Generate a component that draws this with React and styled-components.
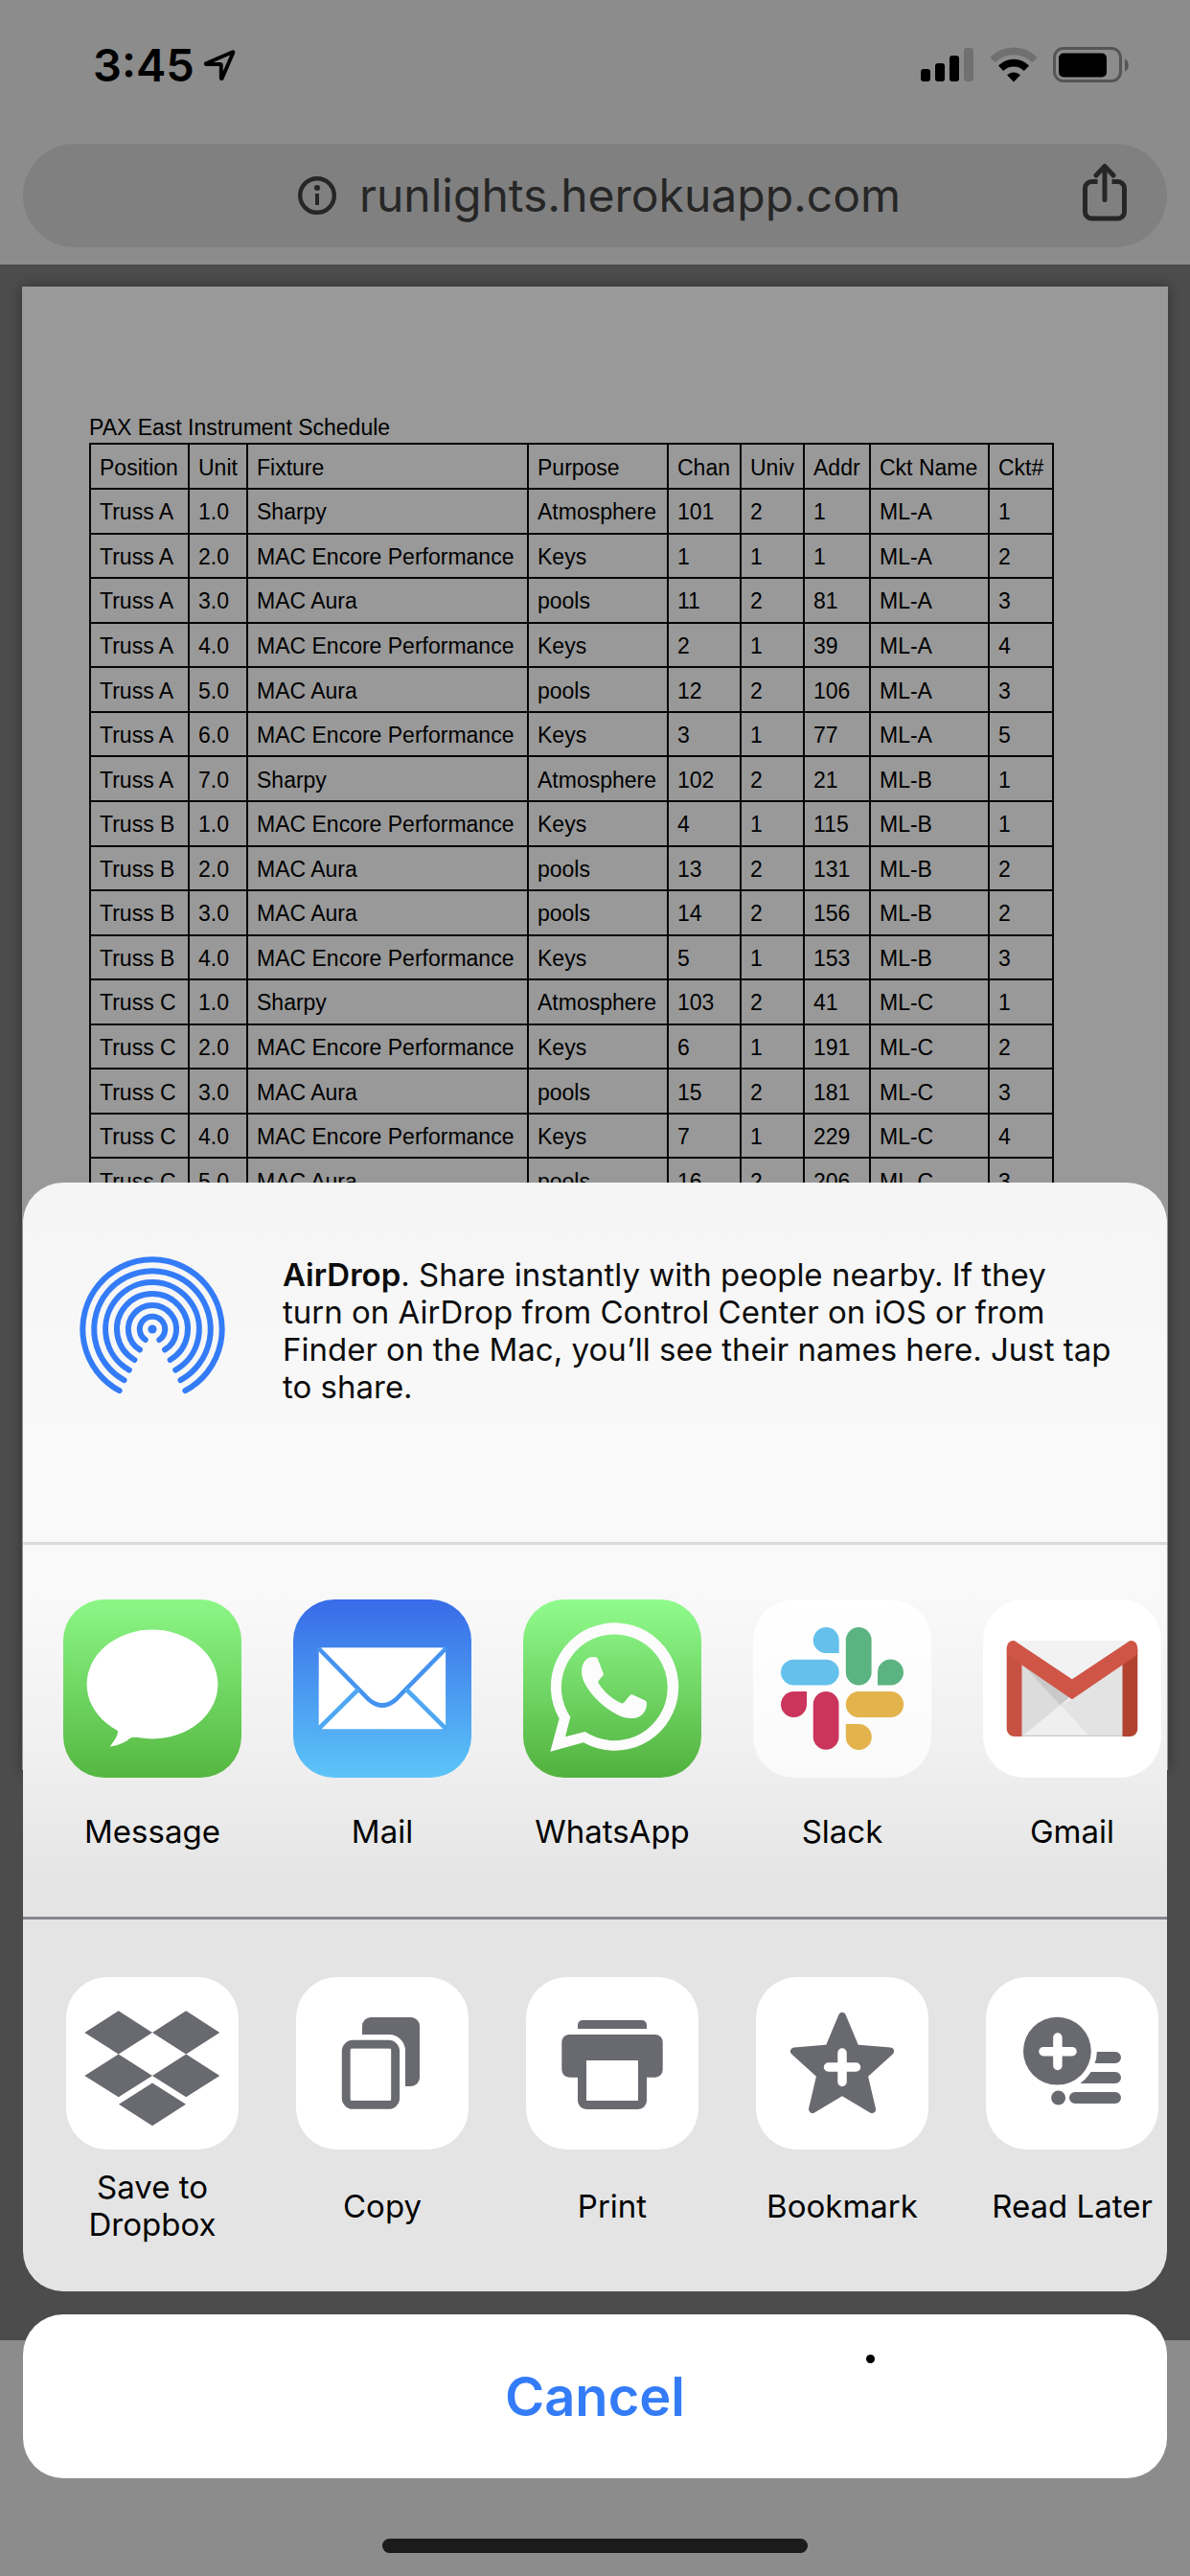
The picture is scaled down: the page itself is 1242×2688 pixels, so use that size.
import React from 'react';
import styled, { createGlobalStyle } from 'styled-components';

const GlobalStyle = createGlobalStyle`
  * { box-sizing: border-box; }
  body { margin: 0; background: #8c8c8c; }
  button { border: 0; padding: 0; margin: 0; background: none; color: inherit; font: inherit; cursor: pointer; }
  svg { display: block; flex: none; }
`;

const uiFont = `Inter, Roboto, 'Liberation Sans', sans-serif`;

const Screen = styled.div`
  position: relative;
  height: 100vh;
  display: flex;
  flex-direction: column;
  overflow: hidden;
  background: #8c8c8c;
  font-family: ${uiFont};
`;

const StatusBar = styled.header`
  height: 136px;
  flex: none;
  display: flex;
  justify-content: space-between;
  align-items: center;
  padding: 0 63px 0 97px;
`;

const StatusGroup = styled.div`
  display: flex;
  align-items: center;
  gap: ${(p) => p.$gap}px;
`;

const Clock = styled.time`
  font-size: 47px;
  line-height: 60px;
  font-weight: 600;
  color: #000;
`;

const Toolbar = styled.nav`
  flex: none;
  padding: 14px 24px 18px;
`;

const AddressBar = styled.div`
  height: 108px;
  border-radius: 54px;
  background: #808080;
  color: #262626;
  display: grid;
  grid-template-columns: 64px 1fr 64px;
  align-items: center;
  padding: 0 33px 0 42px;
`;

const Address = styled.button`
  grid-column: 2;
  display: flex;
  align-items: center;
  justify-content: center;
  gap: 24px;
  font-size: 48px;
  line-height: 60px;
`;

const ShareButton = styled.button`
  display: flex;
  justify-content: center;
`;

const Viewport = styled.main`
  flex: 1;
  min-height: 0;
  overflow: hidden;
  padding: 23px 23px 0;
  background: #4c4c4c;
`;

const Paper = styled.article`
  aspect-ratio: 17 / 22;
  padding: 134px 70px 0;
  background: #999;
  box-shadow: 0 0 12px rgba(0, 0, 0, 0.35);
  font-family: 'Liberation Sans', Arial, sans-serif;
  font-size: 23px;
  line-height: 26px;
  color: #000;
`;

const Schedule = styled.table`
  width: 1006px;
  height: 794px;
  table-layout: fixed;
  border-collapse: collapse;

  caption {
    text-align: left;
    padding-bottom: 3px;
  }
  th, td {
    border: 2px solid #050505;
    padding: 2px 0 0 9px;
    text-align: left;
    vertical-align: middle;
    font-weight: 400;
    white-space: nowrap;
  }
  th { height: 47px; }
  td { height: 46px; }
`;

const Column = styled.col`
  width: ${(p) => p.$width}px;
`;

const BottomBar = styled.footer`
  flex: none;
  height: 246px;
`;

const Overlay = styled.div`
  position: absolute;
  inset: 0;
  display: flex;
  flex-direction: column;
  justify-content: flex-end;
  padding: 0 24px 24px;
`;

const Sheet = styled.section`
  border-radius: 42px;
  overflow: hidden;
  background: linear-gradient(#f5f5f5 0, #f9f9f9 260px, #f9f9f9 430px, #f0f0f0 590px, #e4e4e4 740px, #e4e4e4 100%);
`;

const AirDropPanel = styled.div`
  display: grid;
  grid-template-columns: 152px 1fr;
  column-gap: 60px;
  align-items: start;
  min-height: 375px;
  padding: 77px 32px 0 59px;
`;

const AirDropText = styled.p`
  margin: 0;
  font-size: 33px;
  line-height: 39px;
  color: #0c0c0c;

  strong { font-weight: 600; }
`;

const Divider = styled.hr`
  height: 3px;
  margin: 0;
  border: 0;
  background: ${(p) => p.$color};
`;

const TileRow = styled.div`
  display: flex;
  min-height: 388px;
  padding: ${(p) => p.$top}px 0 0 15px;
  overflow: hidden;
`;

const TileButton = styled.button`
  flex: none;
  width: 240px;
  display: flex;
  flex-direction: column;
  align-items: center;
  align-self: flex-start;
  font-size: 33px;
  line-height: 39px;
  color: #000;
`;

const Tile = styled.span`
  width: ${(p) => p.$size}px;
  height: ${(p) => p.$size}px;
  border-radius: 43px;
  overflow: hidden;
  background: ${(p) => p.$fill};
  color: #696970;
`;

const TileLabel = styled.span`
  display: flex;
  align-items: center;
  justify-content: center;
  height: ${(p) => p.$height}px;
  max-width: ${(p) => p.$max}px;
  margin-top: 20px;
`;

const CancelButton = styled.button`
  position: relative;
  flex: none;
  height: 171px;
  margin-top: 24px;
  border-radius: 42px;
  background: #fff;
  color: #347cf7;
  font-size: 56px;
  line-height: 68px;
  font-weight: 600;
`;

const TouchDot = styled.span`
  position: absolute;
  top: 42px;
  left: 880px;
  width: 9px;
  height: 9px;
  border-radius: 50%;
  background: #000;
`;

const HomeIndicator = styled.div`
  align-self: center;
  flex: none;
  width: 444px;
  height: 15px;
  margin-top: 63px;
  border-radius: 8px;
  background: #1b1b1b;
`;

const columns = [
  ['Position', 103], ['Unit', 61], ['Fixture', 293], ['Purpose', 146], ['Chan', 76],
  ['Univ', 66], ['Addr', 69], ['Ckt Name', 124], ['Ckt#', 67],
];

const rows = [
  ['Truss A', '1.0', 'Sharpy', 'Atmosphere', '101', '2', '1', 'ML-A', '1'],
  ['Truss A', '2.0', 'MAC Encore Performance', 'Keys', '1', '1', '1', 'ML-A', '2'],
  ['Truss A', '3.0', 'MAC Aura', 'pools', '11', '2', '81', 'ML-A', '3'],
  ['Truss A', '4.0', 'MAC Encore Performance', 'Keys', '2', '1', '39', 'ML-A', '4'],
  ['Truss A', '5.0', 'MAC Aura', 'pools', '12', '2', '106', 'ML-A', '3'],
  ['Truss A', '6.0', 'MAC Encore Performance', 'Keys', '3', '1', '77', 'ML-A', '5'],
  ['Truss A', '7.0', 'Sharpy', 'Atmosphere', '102', '2', '21', 'ML-B', '1'],
  ['Truss B', '1.0', 'MAC Encore Performance', 'Keys', '4', '1', '115', 'ML-B', '1'],
  ['Truss B', '2.0', 'MAC Aura', 'pools', '13', '2', '131', 'ML-B', '2'],
  ['Truss B', '3.0', 'MAC Aura', 'pools', '14', '2', '156', 'ML-B', '2'],
  ['Truss B', '4.0', 'MAC Encore Performance', 'Keys', '5', '1', '153', 'ML-B', '3'],
  ['Truss C', '1.0', 'Sharpy', 'Atmosphere', '103', '2', '41', 'ML-C', '1'],
  ['Truss C', '2.0', 'MAC Encore Performance', 'Keys', '6', '1', '191', 'ML-C', '2'],
  ['Truss C', '3.0', 'MAC Aura', 'pools', '15', '2', '181', 'ML-C', '3'],
  ['Truss C', '4.0', 'MAC Encore Performance', 'Keys', '7', '1', '229', 'ML-C', '4'],
  ['Truss C', '5.0', 'MAC Aura', 'pools', '16', '2', '206', 'ML-C', '3'],
];

const LocationIcon = () => (
  <svg width="36" height="36" viewBox="0 0 36 36" fill="none" stroke="#000" strokeWidth="3.900" strokeLinejoin="round" aria-hidden="true">
    <path d="M31.800 4.200L4 16.200C3.600 16.400 3.700 17 4.200 17H18.600C19.400 17 19.800 17.400 19.800 18.200V31.600C19.800 32.200 20.500 32.300 20.700 31.800L32.400 4.800C32.600 4.300 32.300 4 31.800 4.200Z" />
  </svg>
);

const SignalIcon = () => (
  <svg width="56" height="38" viewBox="0 0 56 38" aria-hidden="true">
    <rect x="0" y="23" width="10" height="13" rx="3" />
    <rect x="15" y="17" width="10" height="19" rx="3" />
    <rect x="30" y="9" width="10" height="27" rx="3" />
    <rect x="45" y="1" width="10" height="35" rx="3" fill="#707070" />
  </svg>
);

const WifiIcon = () => (
  <svg width="50" height="38" viewBox="0 0 50 38" fill="none" aria-hidden="true">
    <path d="M3 13.6C15.400 1.300 34.600 1.300 47 13.600" stroke="#707070" strokeWidth="7.600" />
    <path d="M11.600 22.200C19.200 14.800 30.800 14.800 38.400 22.200" stroke="#000" strokeWidth="7.600" />
    <path d="M18 29.300C22 25.400 28 25.400 32 29.300L25 36.500Z" fill="#000" />
  </svg>
);

const BatteryIcon = () => (
  <svg width="80" height="38" viewBox="0 0 80 38" aria-hidden="true">
    <rect x="1.500" y="1.500" width="69" height="34" rx="9.500" fill="none" stroke="#555" strokeWidth="3" />
    <rect x="6" y="6.500" width="50" height="25" rx="5" />
    <path d="M75 12.500c5 2 5 11 0 13z" fill="#555" />
  </svg>
);

const InfoIcon = () => (
  <svg width="40" height="40" viewBox="0 0 40 40" aria-hidden="true">
    <circle cx="20" cy="20" r="17.800" fill="none" stroke="currentColor" strokeWidth="4.400" />
    <circle cx="20" cy="12" r="3" fill="currentColor" />
    <rect x="18" y="18" width="4" height="12" fill="currentColor" />
  </svg>
);

const ShareIcon = () => (
  <svg width="46" height="68" viewBox="0 3 46 68" fill="none" stroke="currentColor" strokeWidth="5" aria-hidden="true">
    <path d="M15.500 22.500H9.500a7 7 0 0 0-7 7V54a7 7 0 0 0 7 7h27a7 7 0 0 0 7-7V29.500a7 7 0 0 0-7-7h-6" />
    <path d="M23 41.500V8M14 16l9-9.500L32 16" strokeLinecap="round" strokeLinejoin="round" />
  </svg>
);

const arcs = [[13.2, 33.5], [25.1, 31.5], [37, 30.2], [48.900, 29.600], [60.800, 29], [72.700, 28.200]];

const arcPath = ([r, degrees]) => {
  const a = (degrees * Math.PI) / 180;
  const dx = r * Math.sin(a);
  const y = 76 + r * Math.cos(a);
  return `M${76 - dx} ${y}A${r} ${r} 0 1 1 ${76 + dx} ${y}`;
};

const AirDropIcon = () => (
  <svg width="152" height="152" viewBox="0 0 152 152" aria-hidden="true">
    <circle cx="76" cy="76" r="4.600" fill="#347cf7" />
    {arcs.map((arc) => (
      <path key={arc[0]} d={arcPath(arc)} fill="none" stroke="#347cf7" strokeWidth="6" strokeLinecap="round" />
    ))}
  </svg>
);

const AppIcon = ({ size, children }) => (
  <svg width={size} height={size} viewBox={`0 0 ${size} ${size}`} aria-hidden="true">{children}</svg>
);

const MessageGlyph = () => (
  <g fill="#fff">
    <ellipse cx="93" cy="88.500" rx="68.400" ry="56.900" />
    <path d="M54 133C59 138 58 141 48.700 153.500C58 153 66 148 70 144.800C73 143 76 144 80 144L74 128Z" />
  </g>
);

const MailGlyph = () => (
  <g>
    <rect x="26.700" y="50.300" width="132.400" height="85" rx="4" fill="#fff" />
    <path d="M26 50.500L79 104.500Q93 116.500 107 104.500L160 50.500" fill="none" stroke="#4593f0" strokeWidth="4.600" />
    <path d="M68.300 93.500L26 135.500M117.700 93.500L160 135.500" fill="none" stroke="#4fa8f3" strokeWidth="4.600" />
  </g>
);

const WhatsAppGlyph = () => (
  <g fill="#fcfcfc">
    <path fillRule="evenodd" d="M28.300 158.800L37.700 124.300A66.700 66.700 0 1 1 63 149.300ZM44 143.300L64.700 138A55.400 55.400 0 1 0 49.300 122.700Z" />
    <path d="M72 60C68 60 61 64 61 76C61 90 81 112 98 120C104 123 108 124 114 124C122 124 129 118 129 108.500C129 106.500 128.500 106 126.500 105L114.500 99.500C113 99 112 99.300 111 100.500L105.500 107.300C104.500 108.500 103.500 108.700 102 108C93 104 84 96 78.800 87.500C78 86.300 78.200 85.500 79 84.500L83 79.800C84 78.500 84 77.800 83.500 76.500L78 62.500C77 60.300 76.500 60 74.500 60Z" />
  </g>
);

const SlackGlyph = () => (
  <g>
    <g fill="#65c1ec">
      <path d="M89.700 56H76.200A13.500 13.500 0 1 1 89.700 42.500Z" />
      <rect x="29" y="62.700" width="60.700" height="26.800" rx="13.400" />
    </g>
    <g fill="#5bb381">
      <rect x="96.800" y="29" width="26.800" height="60.500" rx="13.400" />
      <path d="M130 89.500V76.100A13.500 13.500 0 1 1 143.500 89.500Z" />
    </g>
    <g fill="#cb355b">
      <path d="M56 96V109.500A13.500 13.500 0 1 1 42.500 96Z" />
      <rect x="62.700" y="96" width="26.800" height="60.700" rx="13.400" />
    </g>
    <g fill="#e3b34c">
      <rect x="96.800" y="96" width="60.300" height="27" rx="13.400" />
      <path d="M96.800 130H110.200A13.500 13.500 0 1 1 96.800 143.500Z" />
    </g>
  </g>
);

const GmailGlyph = () => (
  <g>
    <rect x="32" y="43" width="122" height="100" fill="#e6e6e6" />
    <path d="M33 43H153L93 92Z" fill="#f2f2f2" />
    <path d="M40.500 67L111 143H40.500Z" fill="#dcdcdc" />
    <path d="M40.500 67L93 104.300L81 111Z" fill="#c9c9c9" />
    <path d="M40.500 143L93 100L145.500 143Z" fill="#efefef" />
    <path d="M81 110L93 104.300L145.500 68V143H111Z" fill="#e3e3e3" />
    <path d="M40.500 142.200H145.500" stroke="#cfcfcf" strokeWidth="1.600" />
    <path d="M24.700 52V135a8 8 0 0 0 8 8h7.800V62Z" fill="#c75142" />
    <path d="M161.300 52V135a8 8 0 0 1-8 8h-7.800V62Z" fill="#b1432f" />
    <path d="M24.700 52C24.700 45 28.700 42.500 33 43.200L92.900 83.300L153 43.200C157.500 42.500 161.300 45 161.300 52C161.300 56 160 58.500 157 60.500L92.900 104.300L29 60.500C26 58.500 24.700 56 24.700 52Z" fill="#cf5546" />
  </g>
);

const DropboxGlyph = () => (
  <path fill="currentColor" d="M54.700 35.200L90 57.900L54.700 80.500L19.300 57.900ZM125.200 35.200L160.300 57.900L125.200 80.500L90 57.900ZM54.700 80.500L90 102.900L54.700 125.300L19.300 102.900ZM125.200 80.500L160.300 102.900L125.200 125.300L90 102.900ZM90 110.400L125 132.700L90 155.200L55 132.700Z" />
);

const CopyGlyph = () => (
  <g>
    <path d="M69 60V51a9 9 0 0 1 9-9h42a9 9 0 0 1 9 9v54a9 9 0 0 1-9 9h-6V77a17 17 0 0 0-17-17Z" fill="currentColor" />
    <rect x="52.300" y="70.300" width="51.300" height="63" rx="7" fill="none" stroke="currentColor" strokeWidth="9" />
    <rect x="56.800" y="74.800" width="42.300" height="54" fill="#fff" />
  </g>
);

const PrintGlyph = () => (
  <g fill="currentColor">
    <path d="M54 54v-4a5 5 0 0 1 5-5h62a5 5 0 0 1 5 5v4Z" />
    <rect x="37.300" y="60" width="105.400" height="44.700" rx="8" />
    <rect x="54" y="80" width="72" height="58" rx="9" />
    <rect x="63" y="87" width="54" height="42" fill="#fff" />
  </g>
);

const BookmarkGlyph = () => (
  <g strokeLinejoin="round" strokeLinecap="round">
    <path d="M90 41L104 74.500L140 77.500L112.700 102.300L121 138L90 119.500L59 138L67.300 102.300L40 77.500L76 74.500Z" fill="currentColor" stroke="currentColor" strokeWidth="8" />
    <path d="M90 79V109.500M75.500 94H104.500" stroke="#fff" strokeWidth="9.500" />
  </g>
);

const ReadLaterGlyph = () => (
  <g strokeLinecap="round" stroke="currentColor" strokeWidth="12">
    <path d="M110 84H135M100 105H135M93 126H135" />
    <circle cx="74.400" cy="77.200" r="41.500" fill="#fff" stroke="none" />
    <circle cx="74.400" cy="77.200" r="35.400" fill="currentColor" stroke="none" />
    <circle cx="75.600" cy="126" r="7.500" fill="currentColor" stroke="none" />
    <path d="M74.900 63V92.500M60 77.700H90" stroke="#fff" strokeWidth="9.500" />
  </g>
);

const apps = [
  { label: 'Message', fill: 'linear-gradient(#8cf787, #55b741)', Glyph: MessageGlyph },
  { label: 'Mail', fill: 'linear-gradient(#386be8, #5cc5f8)', Glyph: MailGlyph },
  { label: 'WhatsApp', fill: 'linear-gradient(#90fc8d, #52b13e)', Glyph: WhatsAppGlyph },
  { label: 'Slack', fill: 'linear-gradient(#fff, #fafafa)', Glyph: SlackGlyph },
  { label: 'Gmail', fill: '#fff', Glyph: GmailGlyph },
];

const actions = [
  { label: 'Save to Dropbox', narrow: true, Glyph: DropboxGlyph },
  { label: 'Copy', Glyph: CopyGlyph },
  { label: 'Print', Glyph: PrintGlyph },
  { label: 'Bookmark', Glyph: BookmarkGlyph },
  { label: 'Read Later', Glyph: ReadLaterGlyph },
];

export default function App() {
  return (
    <Screen>
      <GlobalStyle />
      <StatusBar>
        <StatusGroup $gap={8}>
          <Clock>3:45</Clock>
          <LocationIcon />
        </StatusGroup>
        <StatusGroup $gap={16}>
          <SignalIcon />
          <WifiIcon />
          <BatteryIcon />
        </StatusGroup>
      </StatusBar>
      <Toolbar>
        <AddressBar>
          <Address type="button">
            <InfoIcon />
            runlights.herokuapp.com
          </Address>
          <ShareButton type="button" aria-label="Share">
            <ShareIcon />
          </ShareButton>
        </AddressBar>
      </Toolbar>
      <Viewport>
        <Paper>
          <Schedule>
            <caption>PAX East Instrument Schedule</caption>
            <colgroup>
              {columns.map(([name, width]) => <Column key={name} $width={width} />)}
            </colgroup>
            <thead>
              <tr>{columns.map(([name]) => <th key={name} scope="col">{name}</th>)}</tr>
            </thead>
            <tbody>
              {rows.map((row) => (
                <tr key={row[0] + row[1]}>
                  {row.map((cell, i) => <td key={columns[i][0]}>{cell}</td>)}
                </tr>
              ))}
            </tbody>
          </Schedule>
        </Paper>
      </Viewport>
      <BottomBar />
      <Overlay>
        <Sheet aria-label="Share">
          <AirDropPanel>
            <AirDropIcon />
            <AirDropText>
              <strong>AirDrop</strong>. Share instantly with people nearby. If they
              <br />
              turn on AirDrop from Control Center on iOS or from Finder on the Mac, you’ll see their names here. Just tap to share.
            </AirDropText>
          </AirDropPanel>
          <Divider $color="#d9d9de" />
          <TileRow $top={57}>
            {apps.map(({ label, fill, Glyph }) => (
              <TileButton key={label} type="button">
                <Tile $size={186} $fill={fill}>
                  <AppIcon size={186}><Glyph /></AppIcon>
                </Tile>
                <TileLabel $height={72} $max={240}>{label}</TileLabel>
              </TileButton>
            ))}
          </TileRow>
          <Divider $color="#86868f" />
          <TileRow $top={60}>
            {actions.map(({ label, narrow, Glyph }) => (
              <TileButton key={label} type="button">
                <Tile $size={180} $fill="#fff">
                  <AppIcon size={180}><Glyph /></AppIcon>
                </Tile>
                <TileLabel $height={78} $max={narrow ? 160 : 240}>{label}</TileLabel>
              </TileButton>
            ))}
          </TileRow>
        </Sheet>
        <CancelButton type="button">
          Cancel
          <TouchDot />
        </CancelButton>
        <HomeIndicator />
      </Overlay>
    </Screen>
  );
}
